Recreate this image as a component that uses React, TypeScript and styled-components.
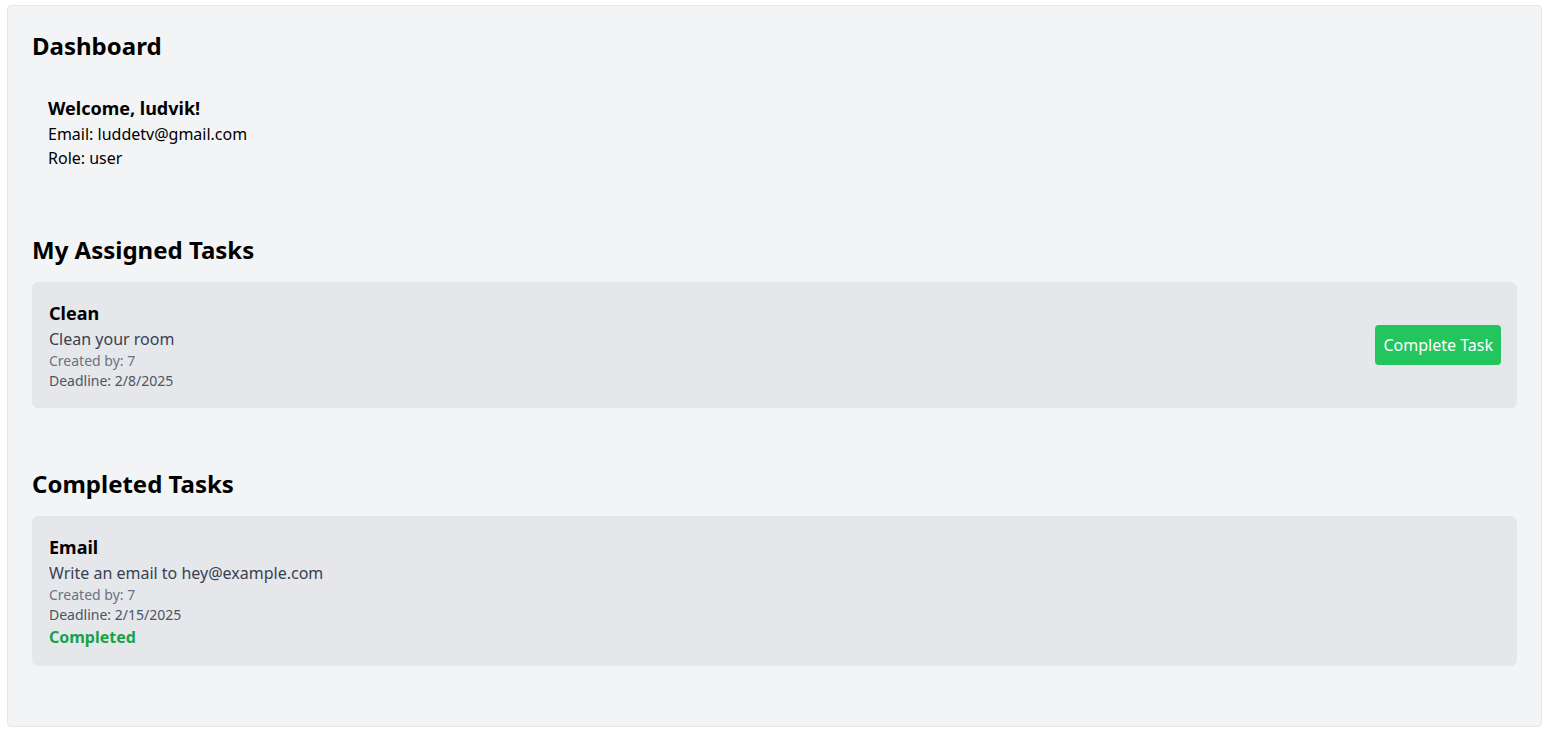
import React from 'react';
import styled, { createGlobalStyle } from 'styled-components';

const GlobalStyle = createGlobalStyle`
  * { box-sizing: border-box; }
  body {
    margin: 0;
    font-family: "Noto Sans", "Open Sans", sans-serif;
    color: #000;
    background: #fff;
  }
`;

interface Task {
  id: number
  title: string
  description: string
  createdBy: number
  deadline: string
  completed?: boolean
}

const assigned: Task[] = [
  { id: 1, title: 'Clean', description: 'Clean your room', createdBy: 7, deadline: '2/8/2025' },
];

const completed: Task[] = [
  { id: 2, title: 'Email', description: 'Write an email to hey@example.com', createdBy: 7, deadline: '2/15/2025', completed: true },
];

const Page = styled.div`
  padding: 5px 5px 7px 7px;
`;

const Panel = styled.div`
  background: #f3f4f6;
  border: 1px solid #e5e7eb;
  border-radius: 4px;
  padding: 24px;
`;

const Title = styled.h1`
  margin: 0 0 16px;
  font-size: 24px;
  line-height: 32px;
  font-weight: 700;
`;

const Welcome = styled.div`
  padding: 16px;
  margin-bottom: 48px;
`;

const WelcomeName = styled.h2`
  margin: 0;
  font-size: 18px;
  line-height: 28px;
  font-weight: 700;
`;

const Line = styled.p`
  margin: 0;
  font-size: 16px;
  line-height: 24px;
`;

const Section = styled.section<{ $gapAbove?: boolean }>`
  margin-top: ${p => (p.$gapAbove ? '60px' : '0')};
  margin-bottom: 36px;
`;

const SectionTitle = styled.h2`
  margin: 0 0 16px;
  font-size: 24px;
  line-height: 32px;
  font-weight: 700;
`;

const TaskList = styled.div`
  display: flex;
  flex-direction: column;
  gap: 16px;
`;

const Card = styled.div`
  display: flex;
  align-items: center;
  justify-content: space-between;
  background: #e5e7eb;
  border: 1px solid #e5e7eb;
  border-radius: 6px;
  padding: 16px 15px 16px 16px;
`;

const TaskTitle = styled.h3`
  margin: 0;
  font-size: 18px;
  line-height: 28px;
  font-weight: 700;
`;

const TaskDesc = styled.p`
  margin: 0;
  font-size: 16px;
  line-height: 24px;
  color: #374151;
`;

const Meta = styled.p<{ $tone: string }>`
  margin: 0;
  font-size: 14px;
  line-height: 20px;
  color: ${p => p.$tone};
`;

const Done = styled.p`
  margin: 0;
  font-size: 16px;
  line-height: 24px;
  font-weight: 700;
  color: #16a34a;
`;

const CompleteButton = styled.button`
  font-family: inherit;
  font-size: 16px;
  line-height: 24px;
  color: #fff;
  background: #22c55e;
  border: none;
  border-radius: 4px;
  padding: 8px;
  cursor: pointer;

  &:hover {
    background: #16a34a;
  }
`;

const TaskCard = ({ task }: { task: Task }) => (
  <Card>
    <div>
      <TaskTitle>{task.title}</TaskTitle>
      <TaskDesc>{task.description}</TaskDesc>
      <Meta $tone="#6b7280">Created by: {task.createdBy}</Meta>
      <Meta $tone="#4b5563">Deadline: {task.deadline}</Meta>
      {task.completed && <Done>Completed</Done>}
    </div>
    {!task.completed && <CompleteButton>Complete Task</CompleteButton>}
  </Card>
);

const App = () => {
  return (
    <Page>
      <GlobalStyle />
      <Panel>
        <Title>Dashboard</Title>
        <Welcome>
          <WelcomeName>Welcome, ludvik!</WelcomeName>
          <Line>Email: luddetv@gmail.com</Line>
          <Line>Role: user</Line>
        </Welcome>

        <Section>
          <SectionTitle>My Assigned Tasks</SectionTitle>
          <TaskList>
            {assigned.map(t => <TaskCard key={t.id} task={t} />)}
          </TaskList>
        </Section>

        <Section $gapAbove>
          <SectionTitle>Completed Tasks</SectionTitle>
          <TaskList>
            {completed.map(t => <TaskCard key={t.id} task={t} />)}
          </TaskList>
        </Section>
      </Panel>
    </Page>
  );
};

export default App;
